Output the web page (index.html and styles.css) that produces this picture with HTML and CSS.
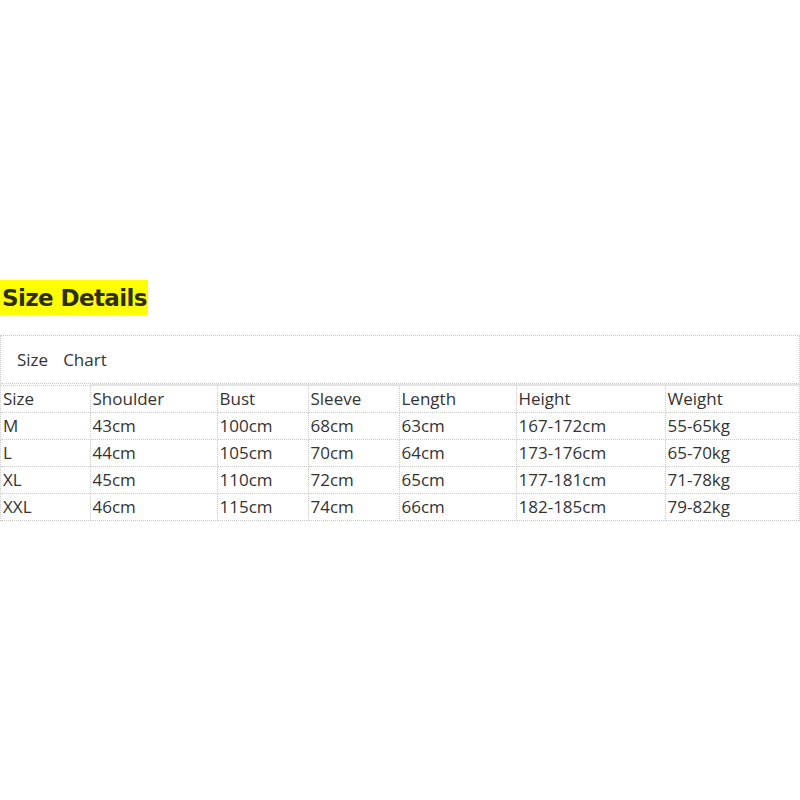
FILE: index.html
```html
<!DOCTYPE html>
<html>
<head>
<meta charset="utf-8">
<link rel="stylesheet" href="styles.css">
</head>
<body>
<div class="page">
  <h2 class="title">Size Details</h2>
  <div class="chart">
    <div class="caption"><span>Size</span><span class="cap2">Chart</span></div>
    <table class="grid">
      <colgroup>
        <col class="c1"><col class="c2"><col class="c3"><col class="c4"><col class="c5"><col class="c6"><col class="c7">
      </colgroup>
      <tr class="head"><td>Size</td><td>Shoulder</td><td>Bust</td><td>Sleeve</td><td>Length</td><td>Height</td><td>Weight</td></tr>
      <tr><td>M</td><td>43cm</td><td>100cm</td><td>68cm</td><td>63cm</td><td>167-172cm</td><td>55-65kg</td></tr>
      <tr><td>L</td><td>44cm</td><td>105cm</td><td>70cm</td><td>64cm</td><td>173-176cm</td><td>65-70kg</td></tr>
      <tr><td>XL</td><td>45cm</td><td>110cm</td><td>72cm</td><td>65cm</td><td>177-181cm</td><td>71-78kg</td></tr>
      <tr><td>XXL</td><td>46cm</td><td>115cm</td><td>74cm</td><td>66cm</td><td>182-185cm</td><td>79-82kg</td></tr>
    </table>
  </div>
</div>
</body>
</html>
```

FILE: styles.css
```css
html, body {
  margin: 0;
  padding: 0;
  background: #ffffff;
}
.page {
  padding-top: 280px;
  width: 800px;
}
.title {
  display: inline-block;
  margin: 0;
  background: #ffff00;
  color: #2e2e12;
  font-family: "DejaVu Sans", sans-serif;
  font-weight: bold;
  font-size: 23px;
  height: 35px;
  line-height: 36px;
  padding: 0 1px 0 2px;
  letter-spacing: -0.6px;
}
.chart {
  margin-top: 20px;
  width: 800px;
  box-sizing: border-box;
  border: 1px dotted #c8c8c8;
  border-bottom: none;
  font-family: "Open Sans", sans-serif;
  color: #333333;
  font-size: 17px;
}
.caption {
  height: 47px;
  line-height: 47px;
  padding-left: 16px;
  border-bottom: 1px dotted #c8c8c8;
}
.cap2 {
  margin-left: 15px;
}
.grid {
  border-collapse: collapse;
  table-layout: fixed;
  width: 798px;
}
.c1 { width: 89px; }
.c2 { width: 127px; }
.c3 { width: 91px; }
.c4 { width: 91px; }
.c5 { width: 117px; }
.c6 { width: 149px; }
.c7 { width: 134px; }
.grid td {
  height: 26px;
  padding: 0 0 0 2px;
  border: 1px dotted #c8c8c8;
  line-height: 26px;
  white-space: nowrap;
  vertical-align: middle;
}
.grid tr td:first-child { border-left: none; }
.grid tr td:last-child { border-right: none; }
.grid tr.head td { border-top: 2px solid #e4e4e4; }
.grid tr.head td:first-child { border-top: 1px dotted #c8c8c8; }
```
